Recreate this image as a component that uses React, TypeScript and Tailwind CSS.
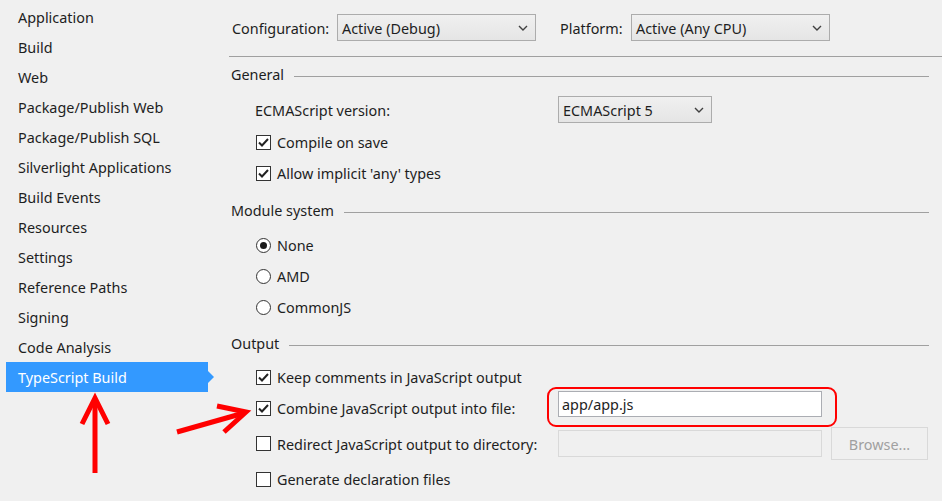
import React from 'react';

const navItems = [
  'Application',
  'Build',
  'Web',
  'Package/Publish Web',
  'Package/Publish SQL',
  'Silverlight Applications',
  'Build Events',
  'Resources',
  'Settings',
  'Reference Paths',
  'Signing',
  'Code Analysis',
  'TypeScript Build',
];

const Chevron = () => (
  <svg width="10" height="6" viewBox="0 0 10 6" className="shrink-0">
    <polyline points="1,1 5,5 9,1" fill="none" stroke="#404040" strokeWidth="1.4" />
  </svg>
);

const Dropdown = ({ value, className }: { value: string; className: string }) => (
  <div
    className={`flex h-[27px] items-center justify-between border border-[#acacac] bg-gradient-to-b from-[#f0f0f0] to-[#e5e5e5] pl-[4px] pr-[7px] ${className}`}
  >
    <span className="pt-[2px]">{value}</span>
    <Chevron />
  </div>
);

const Checkbox = ({ checked }: { checked?: boolean }) => (
  <div className="flex h-[15px] w-[15px] shrink-0 items-center justify-center border border-[#333333] bg-white">
    {checked && (
      <svg width="11" height="9" viewBox="0 0 11 9">
        <polyline points="1,4.5 4,7.5 10,1" fill="none" stroke="#222222" strokeWidth="2" />
      </svg>
    )}
  </div>
);

const Radio = ({ checked }: { checked?: boolean }) => (
  <div className="flex h-[15px] w-[15px] shrink-0 items-center justify-center rounded-full border border-[#333333] bg-white">
    {checked && <div className="h-[7px] w-[7px] rounded-full bg-[#1a1a1a]" />}
  </div>
);

const SectionHeader = ({ title }: { title: string }) => (
  <div className="flex h-[26px] items-center pr-[13px]">
    <span className="pl-[2px] pt-[2px]">{title}</span>
    <div className="ml-[10px] h-px flex-1 translate-y-[2px] bg-[#a0a0a0]" />
  </div>
);

const CheckRow = ({ label, checked, className = '' }: { label: string; checked?: boolean; className?: string }) => (
  <div className={`flex h-[26px] items-center gap-[6px] pl-[27px] ${className}`}>
    <Checkbox checked={checked} />
    <span className="pt-[2px]">{label}</span>
  </div>
);

const RadioRow = ({ label, checked, className = '' }: { label: string; checked?: boolean; className?: string }) => (
  <div className={`flex h-[26px] items-center gap-[6px] pl-[27px] ${className}`}>
    <Radio checked={checked} />
    <span className="pt-[2px]">{label}</span>
  </div>
);

export default function App() {
  return (
    <div
      className="relative flex h-[501px] w-[942px] overflow-hidden bg-[#f0f0f0] text-[14.4px] text-[#1e1e1e]"
      style={{ fontFamily: '"Noto Sans", "Segoe UI", sans-serif' }}
    >
      {/* left nav */}
      <div className="w-[229px] shrink-0 pt-[2px]">
        {navItems.map((item) => {
          const active = item === 'TypeScript Build';
          return (
            <div key={item} className="relative ml-[6px] h-[30px] w-[202px]">
              <div className={`flex h-full items-center pl-[12px] pt-[2px] ${active ? 'bg-[#3399ff] text-white' : ''}`}>
                {item}
              </div>
              {active && (
                <div className="absolute right-[-6px] top-[9px] h-0 w-0 border-y-[6px] border-l-[6px] border-y-transparent border-l-[#3399ff]" />
              )}
            </div>
          );
        })}
      </div>

      {/* right panel */}
      <div className="flex-1">
        <div className="flex h-[57px] items-center border-b border-[#a0a0a0] pb-[1px]">
          <span className="ml-[3px] w-[105px] pt-[2px]">Configuration:</span>
          <Dropdown value="Active (Debug)" className="w-[199px]" />
          <span className="ml-[24px] w-[71px] pt-[2px]">Platform:</span>
          <Dropdown value="Active (Any CPU)" className="w-[199px]" />
        </div>

        <div className="mt-[4px]">
          <SectionHeader title="General" />
          <div className="mt-[9px] flex h-[27px] items-center">
            <span className="w-[329px] pl-[26px] pt-[2px]">ECMAScript version:</span>
            <Dropdown value="ECMAScript 5" className="w-[154px]" />
          </div>
          <CheckRow label="Compile on save" checked className="mt-[6px]" />
          <CheckRow label="Allow implicit 'any' types" checked className="mt-[5px]" />

          <div className="mt-[11px]">
            <SectionHeader title="Module system" />
          </div>
          <RadioRow label="None" checked className="mt-[9px]" />
          <RadioRow label="AMD" className="mt-[5px]" />
          <RadioRow label="CommonJS" className="mt-[5px]" />

          <div className="mt-[10px]">
            <SectionHeader title="Output" />
          </div>
          <CheckRow label="Keep comments in JavaScript output" checked className="mt-[8px]" />

          <div className="mt-[1px] flex h-[26px] items-start">
            <div className="mt-[4px] w-[329px]">
              <CheckRow label="Combine JavaScript output into file:" checked />
            </div>
            <div className="flex h-[26px] w-[264px] items-center border border-[#abadb3] bg-white pl-[3px] pt-[2px]">
              app/app.js
            </div>
          </div>

          <div className="mt-[10px] flex h-[33px] items-center">
            <div className="w-[329px]">
              <CheckRow label="Redirect JavaScript output to directory:" />
            </div>
            <div className="h-[27px] w-[264px] border border-[#d9d9d9] bg-[#f0f0f0]" />
            <div className="ml-[9px] flex h-[33px] w-[97px] items-center justify-center border border-[#d9d9d9] bg-[#f0f0f0] pt-[2px] text-[#a0a0a0]">
              Browse...
            </div>
          </div>

          <CheckRow label="Generate declaration files" className="mt-[6px]" />
        </div>
      </div>

      {/* annotation: red highlight around file box */}
      <div className="pointer-events-none absolute left-[547px] top-[387px] h-[40px] w-[290px] rounded-[9px] border-2 border-[#ff0000]" />

      {/* annotation: red arrows */}
      <svg className="pointer-events-none absolute left-0 top-0" width="942" height="501">
        <g stroke="#ff0000" strokeWidth="5" fill="none" strokeLinecap="butt">
          <line x1="95" y1="473" x2="95" y2="399" />
          <polyline points="82,424 95,398 108,424" />
          <line x1="177" y1="432" x2="244" y2="413" />
          <polyline points="217,406 246,412 224,432" />
        </g>
      </svg>
    </div>
  );
}
